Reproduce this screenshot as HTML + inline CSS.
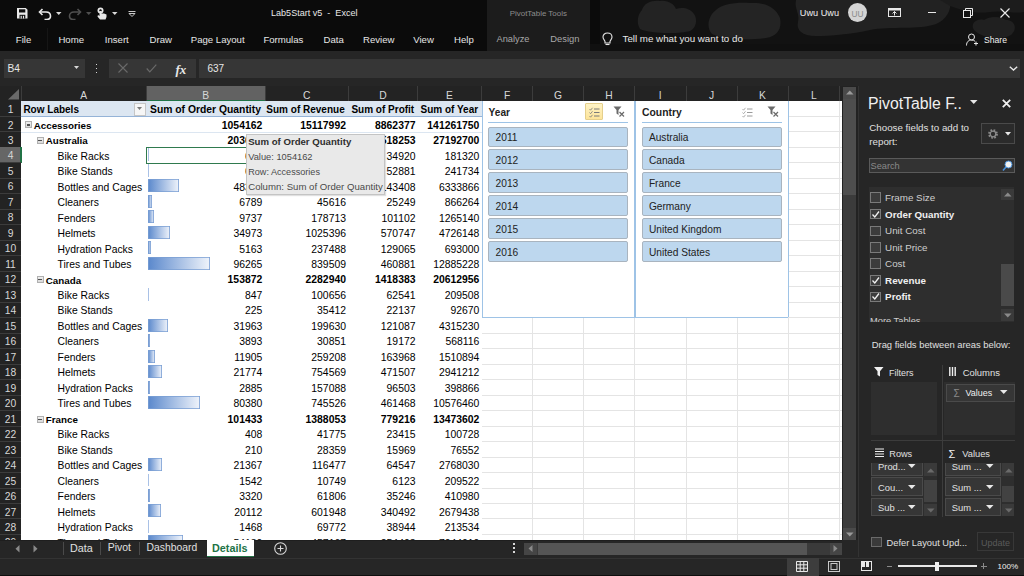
<!DOCTYPE html><html><head><meta charset="utf-8"><style>
html,body{margin:0;padding:0;}
body{width:1024px;height:576px;overflow:hidden;position:relative;background:#262626;font-family:"Liberation Sans",sans-serif;}
.t{position:absolute;white-space:pre;line-height:1;}
.r{position:absolute;}
</style></head><body>
<div class="r" style="left:0.00px;top:0.00px;width:1024.00px;height:51.00px;background:#0b0b0b;"></div>
<div class="r" style="left:487.00px;top:0.00px;width:102.50px;height:51.00px;background:#1c1c1c;"></div>
<svg class="r" style="left:590px;top:0px;" width="434" height="51" viewBox="0 0 434 51">
<rect x="0" y="0" width="434" height="51" fill="#121212"/>
<rect x="0" y="0" width="10" height="51" fill="#0b0b0b"/>
<path d="M50 29 C46 22 48 14 52 10 C54 3 62 0 70 1 C78 0 84 4 86 9 C92 7 100 8 104 14 C108 20 106 28 100 31 C90 34 60 34 50 29Z" fill="#232323"/>
<path d="M122 34 C116 28 118 16 126 10 C132 4 146 2 160 3 C176 2 186 8 190 18 C192 28 188 36 176 38 C160 40 134 40 122 34Z" fill="#242424"/>
<path d="M206 0 H360 C362 10 356 20 346 24 C330 30 300 26 280 30 C262 34 240 36 226 36 C212 36 206 30 208 22 C210 14 204 8 206 0Z" fill="#222222"/>
<path d="M350 0 H434 V12 C424 14 412 10 400 12 C384 14 372 10 360 6Z" fill="#1c1c1c"/>
<path d="M384 30 C380 24 386 18 394 20 C400 16 410 16 416 20 C424 20 428 28 422 34 C416 40 394 40 384 30Z" fill="#202020"/>
<rect x="0" y="44" width="434" height="7" fill="#101010"/>
</svg>
<svg class="r" style="left:17px;top:8px;" width="11" height="11" viewBox="0 0 11 11"><path d="M0 0 H8.8 L10.5 1.7 V10.5 H0 Z" fill="#e8e8e8"/><rect x="2" y="1.3" width="6.3" height="3.2" fill="#0b0b0b"/><rect x="2.5" y="6.8" width="5.8" height="3.7" fill="#0b0b0b"/><rect x="3.6" y="7.8" width="1.2" height="2.7" fill="#e8e8e8"/><rect x="5.9" y="7.8" width="1.2" height="2.7" fill="#e8e8e8"/></svg>
<svg class="r" style="left:38px;top:7px;" width="14" height="13" viewBox="0 0 14 13"><path d="M4.5 2 L1.5 5 L4.5 8" fill="none" stroke="#e8e8e8" stroke-width="1.6"/><path d="M1.8 5 H8 C11 5 12.5 7 12.5 9 C12.5 11 11 12.5 8.5 12.5 H6.5" fill="none" stroke="#e8e8e8" stroke-width="1.6"/></svg>
<svg class="r" style="left:56px;top:12px;" width="6" height="4" viewBox="0 0 6 4"><path d="M0 0 H5.5 L2.75 3Z" fill="#d8d8d8"/></svg>
<svg class="r" style="left:68px;top:7px;" width="14" height="13" viewBox="0 0 14 13"><path d="M9.5 2 L12.5 5 L9.5 8" fill="none" stroke="#505050" stroke-width="1.6"/><path d="M12.2 5 H6 C3 5 1.5 7 1.5 9 C1.5 11 3 12.5 5.5 12.5 H7.5" fill="none" stroke="#505050" stroke-width="1.6"/></svg>
<svg class="r" style="left:86px;top:12px;" width="6" height="4" viewBox="0 0 6 4"><path d="M0 0 H5.5 L2.75 3Z" fill="#505050"/></svg>
<svg class="r" style="left:96px;top:7px;" width="11" height="13" viewBox="0 0 11 13"><circle cx="4.5" cy="3.5" r="3" fill="#e8e8e8"/><circle cx="4.5" cy="3.5" r="1.2" fill="#0b0b0b"/><path d="M3.5 4 V9 L2 8 L1.5 9.5 L4 12.5 H9.5 L10.5 10 V7.5 L8 6.5 H5.5 V4Z" fill="#e8e8e8"/></svg>
<svg class="r" style="left:112px;top:12px;" width="6" height="4" viewBox="0 0 6 4"><path d="M0 0 H5.5 L2.75 3Z" fill="#d8d8d8"/></svg>
<svg class="r" style="left:128px;top:10.5px;" width="8" height="6" viewBox="0 0 8 6"><path d="M0.5 0.5 H7.5" stroke="#c8c8c8" stroke-width="1"/><path d="M1 2.5 H7 L4 5.5Z" fill="none" stroke="#c8c8c8" stroke-width="1"/></svg>
<div class="t" style="left:271.00px;top:9.48px;font-size:9.05px;color:#e8e8e8;">Lab5Start v5  -  Excel</div>
<div class="t" style="left:509.70px;top:10.03px;font-size:7.94px;color:#8c8c8c;">PivotTable Tools</div>
<div class="t" style="left:799.80px;top:9.42px;font-size:9.16px;color:#f0f0f0;">Uwu Uwu</div>
<div class="r" style="left:848px;top:3px;width:19px;height:19px;border-radius:50%;background:#d4d4d4;"></div>
<div class="t" style="left:851.50px;top:9.95px;font-size:8.31px;color:#8a8a8a;">UU</div>
<svg class="r" style="left:888px;top:8px;" width="13" height="9" viewBox="0 0 13 9"><rect x="0.5" y="0.5" width="12" height="8" fill="none" stroke="#e8e8e8" stroke-width="1"/><rect x="0.5" y="0.5" width="12" height="2" fill="#e8e8e8"/><path d="M6.5 7.5 V3.5 M4.5 5.5 L6.5 3.5 L8.5 5.5" stroke="#e8e8e8" fill="none" stroke-width="1"/></svg>
<div class="r" style="left:927.50px;top:12.00px;width:8.50px;height:1.00px;background:#e8e8e8;"></div>
<svg class="r" style="left:963px;top:8px;" width="10" height="10" viewBox="0 0 10 10"><rect x="0.5" y="2.5" width="7" height="7" fill="none" stroke="#e8e8e8"/><path d="M2.5 2.5 V0.5 H9.5 V7.5 H7.5" fill="none" stroke="#e8e8e8"/></svg>
<svg class="r" style="left:1000px;top:8px;" width="10" height="10" viewBox="0 0 10 10"><path d="M0.5 0.5 L9.5 9.5 M9.5 0.5 L0.5 9.5" stroke="#e8e8e8" stroke-width="1.2"/></svg>
<div class="t" style="left:15.77px;top:35.00px;font-size:9.60px;color:#e6e6e6;">File</div>
<div class="t" style="left:58.45px;top:35.00px;font-size:9.60px;color:#e6e6e6;">Home</div>
<div class="t" style="left:104.75px;top:35.00px;font-size:9.60px;color:#e6e6e6;">Insert</div>
<div class="t" style="left:149.55px;top:35.00px;font-size:9.60px;color:#e6e6e6;">Draw</div>
<div class="t" style="left:190.75px;top:35.00px;font-size:9.60px;color:#e6e6e6;">Page Layout</div>
<div class="t" style="left:263.40px;top:35.00px;font-size:9.60px;color:#e6e6e6;">Formulas</div>
<div class="t" style="left:323.56px;top:35.00px;font-size:9.60px;color:#e6e6e6;">Data</div>
<div class="t" style="left:363.01px;top:35.00px;font-size:9.60px;color:#e6e6e6;">Review</div>
<div class="t" style="left:413.26px;top:35.00px;font-size:9.60px;color:#e6e6e6;">View</div>
<div class="t" style="left:454.03px;top:35.00px;font-size:9.60px;color:#e6e6e6;">Help</div>
<div class="r" style="left:47.00px;top:28.00px;width:1.00px;height:22.00px;background:#161616;"></div>
<div class="t" style="left:496.50px;top:35.18px;font-size:9.25px;color:#a8a8a8;">Analyze</div>
<div class="t" style="left:550.30px;top:35.13px;font-size:9.35px;color:#a8a8a8;">Design</div>
<svg class="r" style="left:602px;top:32px;" width="11" height="14" viewBox="0 0 11 14"><path d="M5.5 1 C2.5 1 1 3 1 5 C1 7 2.5 8 3 9.5 V11 H8 V9.5 C8.5 8 10 7 10 5 C10 3 8.5 1 5.5 1Z" fill="none" stroke="#e8e8e8" stroke-width="1.1"/><path d="M3.5 12.5 H7.5" stroke="#e8e8e8" stroke-width="1.1"/></svg>
<div class="t" style="left:622.50px;top:34.23px;font-size:9.75px;color:#e8e8e8;">Tell me what you want to do</div>
<svg class="r" style="left:966px;top:33px;" width="13" height="13" viewBox="0 0 13 13"><circle cx="5.5" cy="4" r="3" fill="none" stroke="#e8e8e8" stroke-width="1"/><path d="M0.5 12.5 C0.5 8.5 3 7 5.5 7 C7 7 8 7.5 9 8.2" fill="none" stroke="#e8e8e8" stroke-width="1"/><path d="M10 8.5 V12.5 M8 10.5 H12" stroke="#e8e8e8" stroke-width="1"/></svg>
<div class="t" style="left:984.00px;top:35.89px;font-size:8.62px;color:#f0f0f0;">Share</div>
<div class="r" style="left:0.00px;top:51.00px;width:1024.00px;height:35.00px;background:#262626;"></div>
<div class="r" style="left:4.00px;top:59.00px;width:81.00px;height:18.50px;background:#363636;"></div>
<div class="t" style="left:7.50px;top:64.39px;font-size:10.22px;color:#e8e8e8;">B4</div>
<svg class="r" style="left:74px;top:66px;" width="6" height="4" viewBox="0 0 6 4"><path d="M0 0 H5 L2.5 3Z" fill="#d8d8d8"/></svg>
<div class="r" style="left:95.50px;top:63.50px;width:1.50px;height:1.50px;background:#d8d8d8;"></div>
<div class="r" style="left:95.50px;top:67.50px;width:1.50px;height:1.50px;background:#d8d8d8;"></div>
<div class="r" style="left:95.50px;top:71.50px;width:1.50px;height:1.50px;background:#d8d8d8;"></div>
<div class="r" style="left:109.00px;top:59.00px;width:87.00px;height:18.50px;background:#363636;"></div>
<svg class="r" style="left:118px;top:63px;" width="10" height="10" viewBox="0 0 10 10"><path d="M0.5 0.5 L9.5 9.5 M9.5 0.5 L0.5 9.5" stroke="#6a6a6a" stroke-width="1.1"/></svg>
<svg class="r" style="left:146px;top:64px;" width="11" height="9" viewBox="0 0 11 9"><path d="M0.7 4.5 L3.8 7.8 L10.3 0.7" fill="none" stroke="#6a6a6a" stroke-width="1.2"/></svg>
<div class="t" style="left:175.50px;top:63.20px;font-size:13.00px;color:#e8e8e8;font-family:Liberation Serif,serif;font-style:italic;font-weight:bold;">fx</div>
<div class="r" style="left:198.50px;top:59.00px;width:821.50px;height:18.50px;background:#363636;"></div>
<div class="t" style="left:207.50px;top:64.49px;font-size:10.01px;color:#e8e8e8;">637</div>
<svg class="r" style="left:1009px;top:66px;" width="9" height="5" viewBox="0 0 9 5"><path d="M0.8 0.8 L4.5 4 L8.2 0.8" fill="none" stroke="#e8e8e8" stroke-width="1.4"/></svg>
<div class="r" style="left:0.00px;top:86.00px;width:842.00px;height:15.00px;background:#232323;"></div>
<div class="r" style="left:146.50px;top:86.00px;width:118.50px;height:14.00px;background:#626262;"></div>
<div class="r" style="left:146.50px;top:99.50px;width:118.50px;height:1.50px;background:#217346;"></div>
<div class="r" style="left:146.00px;top:86.00px;width:1.00px;height:15.00px;background:#3c3c3c;"></div>
<div class="t" style="left:80.31px;top:90.55px;font-size:10.30px;color:#d8d8d8;">A</div>
<div class="r" style="left:264.50px;top:86.00px;width:1.00px;height:15.00px;background:#3c3c3c;"></div>
<div class="t" style="left:202.31px;top:90.55px;font-size:10.30px;color:#d8d8d8;">B</div>
<div class="r" style="left:348.00px;top:86.00px;width:1.00px;height:15.00px;background:#3c3c3c;"></div>
<div class="t" style="left:303.03px;top:90.55px;font-size:10.30px;color:#d8d8d8;">C</div>
<div class="r" style="left:417.00px;top:86.00px;width:1.00px;height:15.00px;background:#3c3c3c;"></div>
<div class="t" style="left:379.28px;top:90.55px;font-size:10.30px;color:#d8d8d8;">D</div>
<div class="r" style="left:481.00px;top:86.00px;width:1.00px;height:15.00px;background:#3c3c3c;"></div>
<div class="t" style="left:446.06px;top:90.55px;font-size:10.30px;color:#d8d8d8;">E</div>
<div class="r" style="left:532.10px;top:86.00px;width:1.00px;height:15.00px;background:#3c3c3c;"></div>
<div class="t" style="left:503.90px;top:90.55px;font-size:10.30px;color:#d8d8d8;">F</div>
<div class="r" style="left:583.00px;top:86.00px;width:1.00px;height:15.00px;background:#3c3c3c;"></div>
<div class="t" style="left:554.04px;top:90.55px;font-size:10.30px;color:#d8d8d8;">G</div>
<div class="r" style="left:634.10px;top:86.00px;width:1.00px;height:15.00px;background:#3c3c3c;"></div>
<div class="t" style="left:605.33px;top:90.55px;font-size:10.30px;color:#d8d8d8;">H</div>
<div class="r" style="left:685.50px;top:86.00px;width:1.00px;height:15.00px;background:#3c3c3c;"></div>
<div class="t" style="left:658.87px;top:90.55px;font-size:10.30px;color:#d8d8d8;">I</div>
<div class="r" style="left:736.50px;top:86.00px;width:1.00px;height:15.00px;background:#3c3c3c;"></div>
<div class="t" style="left:708.92px;top:90.55px;font-size:10.30px;color:#d8d8d8;">J</div>
<div class="r" style="left:787.50px;top:86.00px;width:1.00px;height:15.00px;background:#3c3c3c;"></div>
<div class="t" style="left:759.06px;top:90.55px;font-size:10.30px;color:#d8d8d8;">K</div>
<div class="r" style="left:839.30px;top:86.00px;width:1.00px;height:15.00px;background:#3c3c3c;"></div>
<div class="t" style="left:811.04px;top:90.55px;font-size:10.30px;color:#d8d8d8;">L</div>
<svg class="r" style="left:6px;top:88px;" width="14" height="12" viewBox="0 0 14 12"><path d="M13 1 V11.5 H2 Z" fill="#6a6a6a"/></svg>
<div class="r" style="left:0.00px;top:100.50px;width:21.00px;height:0.50px;background:#3c3c3c;"></div>
<div class="r" style="left:20.50px;top:86.00px;width:1.00px;height:15.00px;background:#3c3c3c;"></div>
<div class="r" style="left:21.00px;top:101.00px;width:820.70px;height:438.60px;background:#ffffff;"></div>
<div class="r" style="left:481.50px;top:115.98px;width:360.20px;height:1.00px;background:#e4e4e4;"></div>
<div class="r" style="left:481.50px;top:131.46px;width:360.20px;height:1.00px;background:#e4e4e4;"></div>
<div class="r" style="left:481.50px;top:146.94px;width:360.20px;height:1.00px;background:#e4e4e4;"></div>
<div class="r" style="left:481.50px;top:162.42px;width:360.20px;height:1.00px;background:#e4e4e4;"></div>
<div class="r" style="left:481.50px;top:177.90px;width:360.20px;height:1.00px;background:#e4e4e4;"></div>
<div class="r" style="left:481.50px;top:193.38px;width:360.20px;height:1.00px;background:#e4e4e4;"></div>
<div class="r" style="left:481.50px;top:208.86px;width:360.20px;height:1.00px;background:#e4e4e4;"></div>
<div class="r" style="left:481.50px;top:224.34px;width:360.20px;height:1.00px;background:#e4e4e4;"></div>
<div class="r" style="left:481.50px;top:239.82px;width:360.20px;height:1.00px;background:#e4e4e4;"></div>
<div class="r" style="left:481.50px;top:255.30px;width:360.20px;height:1.00px;background:#e4e4e4;"></div>
<div class="r" style="left:481.50px;top:270.78px;width:360.20px;height:1.00px;background:#e4e4e4;"></div>
<div class="r" style="left:481.50px;top:286.26px;width:360.20px;height:1.00px;background:#e4e4e4;"></div>
<div class="r" style="left:481.50px;top:301.74px;width:360.20px;height:1.00px;background:#e4e4e4;"></div>
<div class="r" style="left:481.50px;top:317.22px;width:360.20px;height:1.00px;background:#e4e4e4;"></div>
<div class="r" style="left:481.50px;top:332.70px;width:360.20px;height:1.00px;background:#e4e4e4;"></div>
<div class="r" style="left:481.50px;top:348.18px;width:360.20px;height:1.00px;background:#e4e4e4;"></div>
<div class="r" style="left:481.50px;top:363.66px;width:360.20px;height:1.00px;background:#e4e4e4;"></div>
<div class="r" style="left:481.50px;top:379.14px;width:360.20px;height:1.00px;background:#e4e4e4;"></div>
<div class="r" style="left:481.50px;top:394.62px;width:360.20px;height:1.00px;background:#e4e4e4;"></div>
<div class="r" style="left:481.50px;top:410.10px;width:360.20px;height:1.00px;background:#e4e4e4;"></div>
<div class="r" style="left:481.50px;top:425.58px;width:360.20px;height:1.00px;background:#e4e4e4;"></div>
<div class="r" style="left:481.50px;top:441.06px;width:360.20px;height:1.00px;background:#e4e4e4;"></div>
<div class="r" style="left:481.50px;top:456.54px;width:360.20px;height:1.00px;background:#e4e4e4;"></div>
<div class="r" style="left:481.50px;top:472.02px;width:360.20px;height:1.00px;background:#e4e4e4;"></div>
<div class="r" style="left:481.50px;top:487.50px;width:360.20px;height:1.00px;background:#e4e4e4;"></div>
<div class="r" style="left:481.50px;top:502.98px;width:360.20px;height:1.00px;background:#e4e4e4;"></div>
<div class="r" style="left:481.50px;top:518.46px;width:360.20px;height:1.00px;background:#e4e4e4;"></div>
<div class="r" style="left:481.50px;top:533.94px;width:360.20px;height:1.00px;background:#e4e4e4;"></div>
<div class="r" style="left:481.50px;top:549.42px;width:360.20px;height:1.00px;background:#e4e4e4;"></div>
<div class="r" style="left:532.10px;top:101.00px;width:1.00px;height:438.60px;background:#e4e4e4;"></div>
<div class="r" style="left:583.00px;top:101.00px;width:1.00px;height:438.60px;background:#e4e4e4;"></div>
<div class="r" style="left:634.10px;top:101.00px;width:1.00px;height:438.60px;background:#e4e4e4;"></div>
<div class="r" style="left:685.50px;top:101.00px;width:1.00px;height:438.60px;background:#e4e4e4;"></div>
<div class="r" style="left:736.50px;top:101.00px;width:1.00px;height:438.60px;background:#e4e4e4;"></div>
<div class="r" style="left:787.50px;top:101.00px;width:1.00px;height:438.60px;background:#e4e4e4;"></div>
<div class="r" style="left:839.30px;top:101.00px;width:1.00px;height:438.60px;background:#e4e4e4;"></div>
<div class="r" style="left:0.00px;top:101.00px;width:21.00px;height:438.60px;background:#232323;"></div>
<div class="r" style="left:0.00px;top:115.98px;width:21.00px;height:1.00px;background:#3c3c3c;"></div>
<div class="t" style="left:7.64px;top:105.05px;font-size:10.30px;color:#d8d8d8;">1</div>
<div class="r" style="left:0.00px;top:131.46px;width:21.00px;height:1.00px;background:#3c3c3c;"></div>
<div class="t" style="left:7.64px;top:120.53px;font-size:10.30px;color:#d8d8d8;">2</div>
<div class="r" style="left:0.00px;top:146.94px;width:21.00px;height:1.00px;background:#3c3c3c;"></div>
<div class="t" style="left:7.64px;top:136.01px;font-size:10.30px;color:#d8d8d8;">3</div>
<div class="r" style="left:0.00px;top:147.44px;width:20.00px;height:15.48px;background:#666666;"></div>
<div class="r" style="left:20.00px;top:147.44px;width:1.50px;height:15.48px;background:#217346;"></div>
<div class="r" style="left:0.00px;top:162.42px;width:21.00px;height:1.00px;background:#3c3c3c;"></div>
<div class="t" style="left:7.64px;top:151.49px;font-size:10.30px;color:#d8d8d8;">4</div>
<div class="r" style="left:0.00px;top:177.90px;width:21.00px;height:1.00px;background:#3c3c3c;"></div>
<div class="t" style="left:7.64px;top:166.97px;font-size:10.30px;color:#d8d8d8;">5</div>
<div class="r" style="left:0.00px;top:193.38px;width:21.00px;height:1.00px;background:#3c3c3c;"></div>
<div class="t" style="left:7.64px;top:182.45px;font-size:10.30px;color:#d8d8d8;">6</div>
<div class="r" style="left:0.00px;top:208.86px;width:21.00px;height:1.00px;background:#3c3c3c;"></div>
<div class="t" style="left:7.64px;top:197.93px;font-size:10.30px;color:#d8d8d8;">7</div>
<div class="r" style="left:0.00px;top:224.34px;width:21.00px;height:1.00px;background:#3c3c3c;"></div>
<div class="t" style="left:7.64px;top:213.41px;font-size:10.30px;color:#d8d8d8;">8</div>
<div class="r" style="left:0.00px;top:239.82px;width:21.00px;height:1.00px;background:#3c3c3c;"></div>
<div class="t" style="left:7.64px;top:228.89px;font-size:10.30px;color:#d8d8d8;">9</div>
<div class="r" style="left:0.00px;top:255.30px;width:21.00px;height:1.00px;background:#3c3c3c;"></div>
<div class="t" style="left:4.77px;top:244.37px;font-size:10.30px;color:#d8d8d8;">10</div>
<div class="r" style="left:0.00px;top:270.78px;width:21.00px;height:1.00px;background:#3c3c3c;"></div>
<div class="t" style="left:5.15px;top:259.85px;font-size:10.30px;color:#d8d8d8;">11</div>
<div class="r" style="left:0.00px;top:286.26px;width:21.00px;height:1.00px;background:#3c3c3c;"></div>
<div class="t" style="left:4.77px;top:275.33px;font-size:10.30px;color:#d8d8d8;">12</div>
<div class="r" style="left:0.00px;top:301.74px;width:21.00px;height:1.00px;background:#3c3c3c;"></div>
<div class="t" style="left:4.77px;top:290.81px;font-size:10.30px;color:#d8d8d8;">13</div>
<div class="r" style="left:0.00px;top:317.22px;width:21.00px;height:1.00px;background:#3c3c3c;"></div>
<div class="t" style="left:4.77px;top:306.29px;font-size:10.30px;color:#d8d8d8;">14</div>
<div class="r" style="left:0.00px;top:332.70px;width:21.00px;height:1.00px;background:#3c3c3c;"></div>
<div class="t" style="left:4.77px;top:321.77px;font-size:10.30px;color:#d8d8d8;">15</div>
<div class="r" style="left:0.00px;top:348.18px;width:21.00px;height:1.00px;background:#3c3c3c;"></div>
<div class="t" style="left:4.77px;top:337.25px;font-size:10.30px;color:#d8d8d8;">16</div>
<div class="r" style="left:0.00px;top:363.66px;width:21.00px;height:1.00px;background:#3c3c3c;"></div>
<div class="t" style="left:4.77px;top:352.73px;font-size:10.30px;color:#d8d8d8;">17</div>
<div class="r" style="left:0.00px;top:379.14px;width:21.00px;height:1.00px;background:#3c3c3c;"></div>
<div class="t" style="left:4.77px;top:368.21px;font-size:10.30px;color:#d8d8d8;">18</div>
<div class="r" style="left:0.00px;top:394.62px;width:21.00px;height:1.00px;background:#3c3c3c;"></div>
<div class="t" style="left:4.77px;top:383.69px;font-size:10.30px;color:#d8d8d8;">19</div>
<div class="r" style="left:0.00px;top:410.10px;width:21.00px;height:1.00px;background:#3c3c3c;"></div>
<div class="t" style="left:4.77px;top:399.17px;font-size:10.30px;color:#d8d8d8;">20</div>
<div class="r" style="left:0.00px;top:425.58px;width:21.00px;height:1.00px;background:#3c3c3c;"></div>
<div class="t" style="left:4.77px;top:414.65px;font-size:10.30px;color:#d8d8d8;">21</div>
<div class="r" style="left:0.00px;top:441.06px;width:21.00px;height:1.00px;background:#3c3c3c;"></div>
<div class="t" style="left:4.77px;top:430.13px;font-size:10.30px;color:#d8d8d8;">22</div>
<div class="r" style="left:0.00px;top:456.54px;width:21.00px;height:1.00px;background:#3c3c3c;"></div>
<div class="t" style="left:4.77px;top:445.61px;font-size:10.30px;color:#d8d8d8;">23</div>
<div class="r" style="left:0.00px;top:472.02px;width:21.00px;height:1.00px;background:#3c3c3c;"></div>
<div class="t" style="left:4.77px;top:461.09px;font-size:10.30px;color:#d8d8d8;">24</div>
<div class="r" style="left:0.00px;top:487.50px;width:21.00px;height:1.00px;background:#3c3c3c;"></div>
<div class="t" style="left:4.77px;top:476.57px;font-size:10.30px;color:#d8d8d8;">25</div>
<div class="r" style="left:0.00px;top:502.98px;width:21.00px;height:1.00px;background:#3c3c3c;"></div>
<div class="t" style="left:4.77px;top:492.05px;font-size:10.30px;color:#d8d8d8;">26</div>
<div class="r" style="left:0.00px;top:518.46px;width:21.00px;height:1.00px;background:#3c3c3c;"></div>
<div class="t" style="left:4.77px;top:507.53px;font-size:10.30px;color:#d8d8d8;">27</div>
<div class="r" style="left:0.00px;top:533.94px;width:21.00px;height:1.00px;background:#3c3c3c;"></div>
<div class="t" style="left:4.77px;top:523.01px;font-size:10.30px;color:#d8d8d8;">28</div>
<div class="r" style="left:0.00px;top:549.42px;width:21.00px;height:1.00px;background:#3c3c3c;"></div>
<div class="t" style="left:4.77px;top:538.49px;font-size:10.30px;color:#d8d8d8;">29</div>
<div class="r" style="left:21.00px;top:101.00px;width:460.50px;height:15.50px;background:#dce6f1;"></div>
<div class="r" style="left:21.00px;top:116.00px;width:460.50px;height:1.00px;background:#95b3d7;"></div>
<div class="r" style="left:21.00px;top:131.50px;width:460.50px;height:1.00px;background:#dce6f1;"></div>
<div class="r" style="left:133.50px;top:102.50px;width:12.50px;height:13.00px;background:#f6f6f6;border:1px solid #c6c6c6;box-sizing:border-box;"></div>
<svg class="r" style="left:137px;top:107px;" width="6" height="4" viewBox="0 0 6 4"><path d="M0 0 H5 L2.5 3Z" fill="#7a7a7a"/></svg>
<div class="t" style="left:23.40px;top:105.40px;font-size:10.00px;font-weight:bold;color:#000;">Row Labels</div>
<div class="t" style="left:150.02px;top:105.23px;font-size:10.35px;font-weight:bold;color:#000;">Sum of Order Quantity</div>
<div class="t" style="left:266.35px;top:105.40px;font-size:10.00px;font-weight:bold;color:#000;">Sum of Revenue</div>
<div class="t" style="left:351.43px;top:105.40px;font-size:10.00px;font-weight:bold;color:#000;">Sum of Profit</div>
<div class="t" style="left:420.48px;top:105.40px;font-size:10.00px;font-weight:bold;color:#000;">Sum of Year</div>
<div class="r" style="left:25.20px;top:121.48px;width:6.50px;height:7.00px;background:linear-gradient(#f0f0f0,#d8d8d8);border:1px solid #b0b0b0;box-sizing:border-box;"></div>
<div class="r" style="left:26.50px;top:124.48px;width:3.90px;height:1.20px;background:#505050;"></div>
<div class="t" style="left:33.70px;top:120.98px;font-size:9.80px;font-weight:bold;color:#000;">Accessories</div>
<div class="t" style="left:221.82px;top:120.68px;font-size:10.40px;font-weight:bold;color:#000;">1054162</div>
<div class="t" style="left:300.31px;top:120.68px;font-size:10.40px;font-weight:bold;color:#000;">15117992</div>
<div class="t" style="left:375.02px;top:120.68px;font-size:10.40px;font-weight:bold;color:#000;">8862377</div>
<div class="t" style="left:427.35px;top:120.68px;font-size:10.40px;font-weight:bold;color:#000;">141261750</div>
<div class="r" style="left:37.10px;top:136.96px;width:6.50px;height:7.00px;background:linear-gradient(#f0f0f0,#d8d8d8);border:1px solid #b0b0b0;box-sizing:border-box;"></div>
<div class="r" style="left:38.40px;top:139.96px;width:3.90px;height:1.20px;background:#505050;"></div>
<div class="t" style="left:45.80px;top:136.46px;font-size:9.80px;font-weight:bold;color:#000;">Australia</div>
<div class="t" style="left:227.60px;top:136.16px;font-size:10.40px;font-weight:bold;color:#000;">203636</div>
<div class="t" style="left:305.52px;top:136.16px;font-size:10.40px;font-weight:bold;color:#000;">2970436</div>
<div class="t" style="left:375.02px;top:136.16px;font-size:10.40px;font-weight:bold;color:#000;">1518253</div>
<div class="t" style="left:433.13px;top:136.16px;font-size:10.40px;font-weight:bold;color:#000;">27192700</div>
<div class="t" style="left:57.60px;top:151.66px;font-size:10.35px;color:#000;">Bike Racks</div>
<div class="t" style="left:244.95px;top:151.64px;font-size:10.40px;color:#000;">637</div>
<div class="t" style="left:317.08px;top:151.64px;font-size:10.40px;color:#000;">61238</div>
<div class="t" style="left:386.58px;top:151.64px;font-size:10.40px;color:#000;">34920</div>
<div class="t" style="left:444.70px;top:151.64px;font-size:10.40px;color:#000;">181320</div>
<div class="r" style="left:147.8px;top:148.44px;width:1.6px;height:12.98px;background:#a9c1e6;"></div>
<div class="t" style="left:57.60px;top:167.14px;font-size:10.35px;color:#000;">Bike Stands</div>
<div class="t" style="left:244.95px;top:167.12px;font-size:10.40px;color:#000;">660</div>
<div class="t" style="left:317.08px;top:167.12px;font-size:10.40px;color:#000;">88450</div>
<div class="t" style="left:386.58px;top:167.12px;font-size:10.40px;color:#000;">52881</div>
<div class="t" style="left:444.70px;top:167.12px;font-size:10.40px;color:#000;">241734</div>
<div class="r" style="left:147.8px;top:163.92px;width:1.6px;height:12.98px;background:#a9c1e6;"></div>
<div class="t" style="left:57.60px;top:182.62px;font-size:10.35px;color:#000;">Bottles and Cages</div>
<div class="t" style="left:233.38px;top:182.60px;font-size:10.40px;color:#000;">48321</div>
<div class="t" style="left:317.08px;top:182.60px;font-size:10.40px;color:#000;">74622</div>
<div class="t" style="left:380.80px;top:182.60px;font-size:10.40px;color:#000;">143408</div>
<div class="t" style="left:438.92px;top:182.60px;font-size:10.40px;color:#000;">6333866</div>
<div class="r" style="left:147.8px;top:179.40px;width:31.22px;height:12.98px;background:linear-gradient(90deg,#5a88cc,#f0f4fb);box-shadow:inset 0 0 0 0.8px #7a9fd4;"></div>
<div class="t" style="left:57.60px;top:198.10px;font-size:10.35px;color:#000;">Cleaners</div>
<div class="t" style="left:239.17px;top:198.08px;font-size:10.40px;color:#000;">6789</div>
<div class="t" style="left:317.08px;top:198.08px;font-size:10.40px;color:#000;">45616</div>
<div class="t" style="left:386.58px;top:198.08px;font-size:10.40px;color:#000;">25249</div>
<div class="t" style="left:444.70px;top:198.08px;font-size:10.40px;color:#000;">866264</div>
<div class="r" style="left:147.8px;top:194.88px;width:4.39px;height:12.98px;background:linear-gradient(90deg,#5a88cc,#f0f4fb);box-shadow:inset 0 0 0 0.8px #7a9fd4;"></div>
<div class="t" style="left:57.60px;top:213.58px;font-size:10.35px;color:#000;">Fenders</div>
<div class="t" style="left:239.17px;top:213.56px;font-size:10.40px;color:#000;">9737</div>
<div class="t" style="left:311.30px;top:213.56px;font-size:10.40px;color:#000;">178713</div>
<div class="t" style="left:381.57px;top:213.56px;font-size:10.40px;color:#000;">101102</div>
<div class="t" style="left:438.92px;top:213.56px;font-size:10.40px;color:#000;">1265140</div>
<div class="r" style="left:147.8px;top:210.36px;width:6.29px;height:12.98px;background:linear-gradient(90deg,#5a88cc,#f0f4fb);box-shadow:inset 0 0 0 0.8px #7a9fd4;"></div>
<div class="t" style="left:57.60px;top:229.06px;font-size:10.35px;color:#000;">Helmets</div>
<div class="t" style="left:233.38px;top:229.04px;font-size:10.40px;color:#000;">34973</div>
<div class="t" style="left:305.52px;top:229.04px;font-size:10.40px;color:#000;">1025396</div>
<div class="t" style="left:380.80px;top:229.04px;font-size:10.40px;color:#000;">570747</div>
<div class="t" style="left:438.92px;top:229.04px;font-size:10.40px;color:#000;">4726148</div>
<div class="r" style="left:147.8px;top:225.84px;width:22.59px;height:12.98px;background:linear-gradient(90deg,#5a88cc,#f0f4fb);box-shadow:inset 0 0 0 0.8px #7a9fd4;"></div>
<div class="t" style="left:57.60px;top:244.54px;font-size:10.35px;color:#000;">Hydration Packs</div>
<div class="t" style="left:239.17px;top:244.52px;font-size:10.40px;color:#000;">5163</div>
<div class="t" style="left:311.30px;top:244.52px;font-size:10.40px;color:#000;">237488</div>
<div class="t" style="left:380.80px;top:244.52px;font-size:10.40px;color:#000;">129065</div>
<div class="t" style="left:444.70px;top:244.52px;font-size:10.40px;color:#000;">693000</div>
<div class="r" style="left:147.8px;top:241.32px;width:3.34px;height:12.98px;background:linear-gradient(90deg,#5a88cc,#f0f4fb);box-shadow:inset 0 0 0 0.8px #7a9fd4;"></div>
<div class="t" style="left:57.60px;top:260.02px;font-size:10.35px;color:#000;">Tires and Tubes</div>
<div class="t" style="left:233.38px;top:260.00px;font-size:10.40px;color:#000;">96265</div>
<div class="t" style="left:311.30px;top:260.00px;font-size:10.40px;color:#000;">839509</div>
<div class="t" style="left:380.80px;top:260.00px;font-size:10.40px;color:#000;">460881</div>
<div class="t" style="left:433.13px;top:260.00px;font-size:10.40px;color:#000;">12885228</div>
<div class="r" style="left:147.8px;top:256.80px;width:62.19px;height:12.98px;background:linear-gradient(90deg,#5a88cc,#f0f4fb);box-shadow:inset 0 0 0 0.8px #7a9fd4;"></div>
<div class="r" style="left:37.10px;top:276.28px;width:6.50px;height:7.00px;background:linear-gradient(#f0f0f0,#d8d8d8);border:1px solid #b0b0b0;box-sizing:border-box;"></div>
<div class="r" style="left:38.40px;top:279.28px;width:3.90px;height:1.20px;background:#505050;"></div>
<div class="t" style="left:45.80px;top:275.78px;font-size:9.80px;font-weight:bold;color:#000;">Canada</div>
<div class="t" style="left:227.60px;top:275.48px;font-size:10.40px;font-weight:bold;color:#000;">153872</div>
<div class="t" style="left:305.52px;top:275.48px;font-size:10.40px;font-weight:bold;color:#000;">2282940</div>
<div class="t" style="left:375.02px;top:275.48px;font-size:10.40px;font-weight:bold;color:#000;">1418383</div>
<div class="t" style="left:433.13px;top:275.48px;font-size:10.40px;font-weight:bold;color:#000;">20612956</div>
<div class="t" style="left:57.60px;top:290.98px;font-size:10.35px;color:#000;">Bike Racks</div>
<div class="t" style="left:244.95px;top:290.96px;font-size:10.40px;color:#000;">847</div>
<div class="t" style="left:311.30px;top:290.96px;font-size:10.40px;color:#000;">100656</div>
<div class="t" style="left:386.58px;top:290.96px;font-size:10.40px;color:#000;">62541</div>
<div class="t" style="left:444.70px;top:290.96px;font-size:10.40px;color:#000;">209508</div>
<div class="r" style="left:147.8px;top:287.76px;width:1.6px;height:12.98px;background:#a9c1e6;"></div>
<div class="t" style="left:57.60px;top:306.46px;font-size:10.35px;color:#000;">Bike Stands</div>
<div class="t" style="left:244.95px;top:306.44px;font-size:10.40px;color:#000;">225</div>
<div class="t" style="left:317.08px;top:306.44px;font-size:10.40px;color:#000;">35412</div>
<div class="t" style="left:386.58px;top:306.44px;font-size:10.40px;color:#000;">22137</div>
<div class="t" style="left:450.48px;top:306.44px;font-size:10.40px;color:#000;">92670</div>
<div class="t" style="left:57.60px;top:321.94px;font-size:10.35px;color:#000;">Bottles and Cages</div>
<div class="t" style="left:233.38px;top:321.92px;font-size:10.40px;color:#000;">31963</div>
<div class="t" style="left:311.30px;top:321.92px;font-size:10.40px;color:#000;">199630</div>
<div class="t" style="left:380.80px;top:321.92px;font-size:10.40px;color:#000;">121087</div>
<div class="t" style="left:438.92px;top:321.92px;font-size:10.40px;color:#000;">4315230</div>
<div class="r" style="left:147.8px;top:318.72px;width:20.65px;height:12.98px;background:linear-gradient(90deg,#5a88cc,#f0f4fb);box-shadow:inset 0 0 0 0.8px #7a9fd4;"></div>
<div class="t" style="left:57.60px;top:337.43px;font-size:10.35px;color:#000;">Cleaners</div>
<div class="t" style="left:239.17px;top:337.40px;font-size:10.40px;color:#000;">3893</div>
<div class="t" style="left:317.08px;top:337.40px;font-size:10.40px;color:#000;">30851</div>
<div class="t" style="left:386.58px;top:337.40px;font-size:10.40px;color:#000;">19172</div>
<div class="t" style="left:445.47px;top:337.40px;font-size:10.40px;color:#000;">568116</div>
<div class="r" style="left:147.8px;top:334.20px;width:2.51px;height:12.98px;background:linear-gradient(90deg,#5a88cc,#f0f4fb);box-shadow:inset 0 0 0 0.8px #7a9fd4;"></div>
<div class="t" style="left:57.60px;top:352.90px;font-size:10.35px;color:#000;">Fenders</div>
<div class="t" style="left:234.16px;top:352.88px;font-size:10.40px;color:#000;">11905</div>
<div class="t" style="left:311.30px;top:352.88px;font-size:10.40px;color:#000;">259208</div>
<div class="t" style="left:380.80px;top:352.88px;font-size:10.40px;color:#000;">163968</div>
<div class="t" style="left:438.92px;top:352.88px;font-size:10.40px;color:#000;">1510894</div>
<div class="r" style="left:147.8px;top:349.68px;width:7.69px;height:12.98px;background:linear-gradient(90deg,#5a88cc,#f0f4fb);box-shadow:inset 0 0 0 0.8px #7a9fd4;"></div>
<div class="t" style="left:57.60px;top:368.38px;font-size:10.35px;color:#000;">Helmets</div>
<div class="t" style="left:233.38px;top:368.36px;font-size:10.40px;color:#000;">21774</div>
<div class="t" style="left:311.30px;top:368.36px;font-size:10.40px;color:#000;">754569</div>
<div class="t" style="left:380.80px;top:368.36px;font-size:10.40px;color:#000;">471507</div>
<div class="t" style="left:438.92px;top:368.36px;font-size:10.40px;color:#000;">2941212</div>
<div class="r" style="left:147.8px;top:365.16px;width:14.07px;height:12.98px;background:linear-gradient(90deg,#5a88cc,#f0f4fb);box-shadow:inset 0 0 0 0.8px #7a9fd4;"></div>
<div class="t" style="left:57.60px;top:383.86px;font-size:10.35px;color:#000;">Hydration Packs</div>
<div class="t" style="left:239.17px;top:383.84px;font-size:10.40px;color:#000;">2885</div>
<div class="t" style="left:311.30px;top:383.84px;font-size:10.40px;color:#000;">157088</div>
<div class="t" style="left:386.58px;top:383.84px;font-size:10.40px;color:#000;">96503</div>
<div class="t" style="left:444.70px;top:383.84px;font-size:10.40px;color:#000;">398866</div>
<div class="r" style="left:147.8px;top:380.64px;width:1.86px;height:12.98px;background:linear-gradient(90deg,#5a88cc,#f0f4fb);box-shadow:inset 0 0 0 0.8px #7a9fd4;"></div>
<div class="t" style="left:57.60px;top:399.34px;font-size:10.35px;color:#000;">Tires and Tubes</div>
<div class="t" style="left:233.38px;top:399.32px;font-size:10.40px;color:#000;">80380</div>
<div class="t" style="left:311.30px;top:399.32px;font-size:10.40px;color:#000;">745526</div>
<div class="t" style="left:380.80px;top:399.32px;font-size:10.40px;color:#000;">461468</div>
<div class="t" style="left:433.13px;top:399.32px;font-size:10.40px;color:#000;">10576460</div>
<div class="r" style="left:147.8px;top:396.12px;width:51.93px;height:12.98px;background:linear-gradient(90deg,#5a88cc,#f0f4fb);box-shadow:inset 0 0 0 0.8px #7a9fd4;"></div>
<div class="r" style="left:37.10px;top:415.60px;width:6.50px;height:7.00px;background:linear-gradient(#f0f0f0,#d8d8d8);border:1px solid #b0b0b0;box-sizing:border-box;"></div>
<div class="r" style="left:38.40px;top:418.60px;width:3.90px;height:1.20px;background:#505050;"></div>
<div class="t" style="left:45.80px;top:415.10px;font-size:9.80px;font-weight:bold;color:#000;">France</div>
<div class="t" style="left:227.60px;top:414.80px;font-size:10.40px;font-weight:bold;color:#000;">101433</div>
<div class="t" style="left:305.52px;top:414.80px;font-size:10.40px;font-weight:bold;color:#000;">1388053</div>
<div class="t" style="left:380.80px;top:414.80px;font-size:10.40px;font-weight:bold;color:#000;">779216</div>
<div class="t" style="left:433.13px;top:414.80px;font-size:10.40px;font-weight:bold;color:#000;">13473602</div>
<div class="t" style="left:57.60px;top:430.30px;font-size:10.35px;color:#000;">Bike Racks</div>
<div class="t" style="left:244.95px;top:430.28px;font-size:10.40px;color:#000;">408</div>
<div class="t" style="left:317.08px;top:430.28px;font-size:10.40px;color:#000;">41775</div>
<div class="t" style="left:386.58px;top:430.28px;font-size:10.40px;color:#000;">23415</div>
<div class="t" style="left:444.70px;top:430.28px;font-size:10.40px;color:#000;">100728</div>
<div class="t" style="left:57.60px;top:445.78px;font-size:10.35px;color:#000;">Bike Stands</div>
<div class="t" style="left:244.95px;top:445.76px;font-size:10.40px;color:#000;">210</div>
<div class="t" style="left:317.08px;top:445.76px;font-size:10.40px;color:#000;">28359</div>
<div class="t" style="left:386.58px;top:445.76px;font-size:10.40px;color:#000;">15969</div>
<div class="t" style="left:450.48px;top:445.76px;font-size:10.40px;color:#000;">76552</div>
<div class="t" style="left:57.60px;top:461.26px;font-size:10.35px;color:#000;">Bottles and Cages</div>
<div class="t" style="left:233.38px;top:461.24px;font-size:10.40px;color:#000;">21367</div>
<div class="t" style="left:312.07px;top:461.24px;font-size:10.40px;color:#000;">116477</div>
<div class="t" style="left:386.58px;top:461.24px;font-size:10.40px;color:#000;">64547</div>
<div class="t" style="left:438.92px;top:461.24px;font-size:10.40px;color:#000;">2768030</div>
<div class="r" style="left:147.8px;top:458.04px;width:13.80px;height:12.98px;background:linear-gradient(90deg,#5a88cc,#f0f4fb);box-shadow:inset 0 0 0 0.8px #7a9fd4;"></div>
<div class="t" style="left:57.60px;top:476.74px;font-size:10.35px;color:#000;">Cleaners</div>
<div class="t" style="left:239.17px;top:476.72px;font-size:10.40px;color:#000;">1542</div>
<div class="t" style="left:317.08px;top:476.72px;font-size:10.40px;color:#000;">10749</div>
<div class="t" style="left:392.37px;top:476.72px;font-size:10.40px;color:#000;">6123</div>
<div class="t" style="left:444.70px;top:476.72px;font-size:10.40px;color:#000;">209522</div>
<div class="r" style="left:147.8px;top:473.52px;width:1.6px;height:12.98px;background:#a9c1e6;"></div>
<div class="t" style="left:57.60px;top:492.22px;font-size:10.35px;color:#000;">Fenders</div>
<div class="t" style="left:239.17px;top:492.20px;font-size:10.40px;color:#000;">3320</div>
<div class="t" style="left:317.08px;top:492.20px;font-size:10.40px;color:#000;">61806</div>
<div class="t" style="left:386.58px;top:492.20px;font-size:10.40px;color:#000;">35246</div>
<div class="t" style="left:444.70px;top:492.20px;font-size:10.40px;color:#000;">410980</div>
<div class="r" style="left:147.8px;top:489.00px;width:2.14px;height:12.98px;background:linear-gradient(90deg,#5a88cc,#f0f4fb);box-shadow:inset 0 0 0 0.8px #7a9fd4;"></div>
<div class="t" style="left:57.60px;top:507.70px;font-size:10.35px;color:#000;">Helmets</div>
<div class="t" style="left:234.16px;top:507.68px;font-size:10.40px;color:#000;">20112</div>
<div class="t" style="left:311.30px;top:507.68px;font-size:10.40px;color:#000;">601948</div>
<div class="t" style="left:380.80px;top:507.68px;font-size:10.40px;color:#000;">340492</div>
<div class="t" style="left:438.92px;top:507.68px;font-size:10.40px;color:#000;">2679438</div>
<div class="r" style="left:147.8px;top:504.48px;width:12.99px;height:12.98px;background:linear-gradient(90deg,#5a88cc,#f0f4fb);box-shadow:inset 0 0 0 0.8px #7a9fd4;"></div>
<div class="t" style="left:57.60px;top:523.19px;font-size:10.35px;color:#000;">Hydration Packs</div>
<div class="t" style="left:239.17px;top:523.16px;font-size:10.40px;color:#000;">1468</div>
<div class="t" style="left:317.08px;top:523.16px;font-size:10.40px;color:#000;">69772</div>
<div class="t" style="left:386.58px;top:523.16px;font-size:10.40px;color:#000;">38944</div>
<div class="t" style="left:444.70px;top:523.16px;font-size:10.40px;color:#000;">213534</div>
<div class="r" style="left:147.8px;top:519.96px;width:1.6px;height:12.98px;background:#a9c1e6;"></div>
<div class="t" style="left:57.60px;top:538.67px;font-size:10.35px;color:#000;">Tires and Tubes</div>
<div class="t" style="left:233.38px;top:538.64px;font-size:10.40px;color:#000;">54180</div>
<div class="t" style="left:311.30px;top:538.64px;font-size:10.40px;color:#000;">457167</div>
<div class="t" style="left:380.80px;top:538.64px;font-size:10.40px;color:#000;">254403</div>
<div class="t" style="left:438.92px;top:538.64px;font-size:10.40px;color:#000;">7044010</div>
<div class="r" style="left:147.8px;top:535.44px;width:35.00px;height:12.98px;background:linear-gradient(90deg,#5a88cc,#f0f4fb);box-shadow:inset 0 0 0 0.8px #7a9fd4;"></div>
<div class="r" style="left:146.00px;top:147.00px;width:118.80px;height:16.60px;border:1.6px solid #2f7a4e;box-sizing:border-box;"></div>
<div class="r" style="left:246.0px;top:134.0px;width:138.8px;height:60.8px;background:#e9e9e9;border:1px solid #c4c4c4;box-sizing:border-box;box-shadow:1px 1px 1px rgba(0,0,0,0.12);"></div>
<div class="t" style="left:248.20px;top:136.89px;font-size:9.62px;font-weight:bold;color:#2e2e2e;">Sum of Order Quantity</div>
<div class="t" style="left:248.20px;top:152.55px;font-size:9.29px;color:#4a4a4a;">Value: 1054162</div>
<div class="t" style="left:248.20px;top:167.95px;font-size:9.10px;color:#4a4a4a;">Row: Accessories</div>
<div class="t" style="left:248.20px;top:182.39px;font-size:9.62px;color:#4a4a4a;">Column: Sum of Order Quantity</div>
<div class="r" style="left:481.50px;top:100.70px;width:153.30px;height:216.80px;background:#ffffff;"></div>
<div class="r" style="left:481.50px;top:100.70px;width:1.00px;height:216.80px;background:#9ec3e6;"></div>
<div class="r" style="left:633.80px;top:100.70px;width:1.00px;height:216.80px;background:#9ec3e6;"></div>
<div class="r" style="left:481.50px;top:316.50px;width:153.30px;height:1.00px;background:#9ec3e6;"></div>
<div class="t" style="left:488.60px;top:108.44px;font-size:10.13px;font-weight:bold;color:#222;">Year</div>
<div class="r" style="left:488.30px;top:122.20px;width:139.60px;height:1.00px;background:#9dc3e6;"></div>
<div class="r" style="left:488.30px;top:126.50px;width:139.60px;height:20.3px;background:#bdd7ee;border:1px solid #a9b4bf;box-sizing:border-box;border-radius:2px;"></div>
<div class="t" style="left:495.60px;top:132.60px;font-size:10.20px;color:#222;">2011</div>
<div class="r" style="left:488.30px;top:149.48px;width:139.60px;height:20.3px;background:#bdd7ee;border:1px solid #a9b4bf;box-sizing:border-box;border-radius:2px;"></div>
<div class="t" style="left:495.60px;top:155.58px;font-size:10.20px;color:#222;">2012</div>
<div class="r" style="left:488.30px;top:172.46px;width:139.60px;height:20.3px;background:#bdd7ee;border:1px solid #a9b4bf;box-sizing:border-box;border-radius:2px;"></div>
<div class="t" style="left:495.60px;top:178.56px;font-size:10.20px;color:#222;">2013</div>
<div class="r" style="left:488.30px;top:195.44px;width:139.60px;height:20.3px;background:#bdd7ee;border:1px solid #a9b4bf;box-sizing:border-box;border-radius:2px;"></div>
<div class="t" style="left:495.60px;top:201.54px;font-size:10.20px;color:#222;">2014</div>
<div class="r" style="left:488.30px;top:218.42px;width:139.60px;height:20.3px;background:#bdd7ee;border:1px solid #a9b4bf;box-sizing:border-box;border-radius:2px;"></div>
<div class="t" style="left:495.60px;top:224.52px;font-size:10.20px;color:#222;">2015</div>
<div class="r" style="left:488.30px;top:241.40px;width:139.60px;height:20.3px;background:#bdd7ee;border:1px solid #a9b4bf;box-sizing:border-box;border-radius:2px;"></div>
<div class="t" style="left:495.60px;top:247.50px;font-size:10.20px;color:#222;">2016</div>
<div class="r" style="left:634.80px;top:100.70px;width:153.70px;height:216.80px;background:#ffffff;"></div>
<div class="r" style="left:634.80px;top:100.70px;width:1.00px;height:216.80px;background:#9ec3e6;"></div>
<div class="r" style="left:787.50px;top:100.70px;width:1.00px;height:216.80px;background:#9ec3e6;"></div>
<div class="r" style="left:634.80px;top:316.50px;width:153.70px;height:1.00px;background:#9ec3e6;"></div>
<div class="t" style="left:642.00px;top:108.32px;font-size:10.36px;font-weight:bold;color:#222;">Country</div>
<div class="r" style="left:641.60px;top:122.20px;width:140.00px;height:1.00px;background:#9dc3e6;"></div>
<div class="r" style="left:641.60px;top:126.50px;width:140.00px;height:20.3px;background:#bdd7ee;border:1px solid #a9b4bf;box-sizing:border-box;border-radius:2px;"></div>
<div class="t" style="left:648.90px;top:132.60px;font-size:10.20px;color:#222;">Australia</div>
<div class="r" style="left:641.60px;top:149.48px;width:140.00px;height:20.3px;background:#bdd7ee;border:1px solid #a9b4bf;box-sizing:border-box;border-radius:2px;"></div>
<div class="t" style="left:648.90px;top:155.58px;font-size:10.20px;color:#222;">Canada</div>
<div class="r" style="left:641.60px;top:172.46px;width:140.00px;height:20.3px;background:#bdd7ee;border:1px solid #a9b4bf;box-sizing:border-box;border-radius:2px;"></div>
<div class="t" style="left:648.90px;top:178.56px;font-size:10.20px;color:#222;">France</div>
<div class="r" style="left:641.60px;top:195.44px;width:140.00px;height:20.3px;background:#bdd7ee;border:1px solid #a9b4bf;box-sizing:border-box;border-radius:2px;"></div>
<div class="t" style="left:648.90px;top:201.54px;font-size:10.20px;color:#222;">Germany</div>
<div class="r" style="left:641.60px;top:218.42px;width:140.00px;height:20.3px;background:#bdd7ee;border:1px solid #a9b4bf;box-sizing:border-box;border-radius:2px;"></div>
<div class="t" style="left:648.90px;top:224.52px;font-size:10.20px;color:#222;">United Kingdom</div>
<div class="r" style="left:641.60px;top:241.40px;width:140.00px;height:20.3px;background:#bdd7ee;border:1px solid #a9b4bf;box-sizing:border-box;border-radius:2px;"></div>
<div class="t" style="left:648.90px;top:247.50px;font-size:10.20px;color:#222;">United States</div>
<div class="r" style="left:585px;top:103.3px;width:17.6px;height:17.2px;background:linear-gradient(#fef3c6,#fde49a);border:1px solid #e5cf8c;box-sizing:border-box;border-radius:1px;"></div>
<svg class="r" style="left:589px;top:106.5px;" width="11" height="11" viewBox="0 0 11 11"><path d="M0.5 2 L1.6 3.2 L3.5 0.8 M0.5 5.5 L1.6 6.7 L3.5 4.3 M0.5 9 L1.6 10.2 L3.5 7.8" fill="none" stroke="#7a7a7a" stroke-width="0.8"/><path d="M5 2 H10.5 M5 5.5 H10.5 M5 9 H10.5" stroke="#7a7a7a" stroke-width="1"/></svg>
<svg class="r" style="left:741.5px;top:106.5px;" width="11" height="11" viewBox="0 0 11 11"><path d="M0.5 2 L1.6 3.2 L3.5 0.8 M0.5 5.5 L1.6 6.7 L3.5 4.3 M0.5 9 L1.6 10.2 L3.5 7.8" fill="none" stroke="#9a9a9a" stroke-width="0.8"/><path d="M5 2 H10.5 M5 5.5 H10.5 M5 9 H10.5" stroke="#9a9a9a" stroke-width="1"/></svg>
<svg class="r" style="left:612.8px;top:106.3px;" width="12" height="11" viewBox="0 0 12 11"><path d="M0.5 0.5 H8.5 L5.5 4 V9 L3.5 7.5 V4 Z" fill="#6a6a6a"/><path d="M6.5 6 L11 10.5 M11 6 L6.5 10.5" stroke="#6a6a6a" stroke-width="1.2"/></svg>
<svg class="r" style="left:766.5px;top:106px;" width="12" height="11" viewBox="0 0 12 11"><path d="M0.5 0.5 H8.5 L5.5 4 V9 L3.5 7.5 V4 Z" fill="#6a6a6a"/><path d="M6.5 6 L11 10.5 M11 6 L6.5 10.5" stroke="#6a6a6a" stroke-width="1.2"/></svg>
<div class="r" style="left:841.70px;top:86.00px;width:16.30px;height:471.80px;background:#222222;"></div>
<div class="r" style="left:843.00px;top:86.80px;width:13.30px;height:453.20px;background:#3b3b3b;"></div>
<div class="r" style="left:843.00px;top:86.80px;width:13.30px;height:12.20px;background:#4a4a4a;"></div>
<svg class="r" style="left:846px;top:90px;" width="8" height="5" viewBox="0 0 8 5"><path d="M0 4.5 L3.75 0.5 L7.5 4.5Z" fill="#9a9a9a"/></svg>
<div class="r" style="left:843.00px;top:99.00px;width:13.30px;height:95.90px;background:#4e4e4e;"></div>
<div class="r" style="left:843.00px;top:528.00px;width:13.30px;height:12.00px;background:#4a4a4a;"></div>
<svg class="r" style="left:846px;top:532px;" width="8" height="5" viewBox="0 0 8 5"><path d="M0 0.5 L3.75 4.5 L7.5 0.5Z" fill="#9a9a9a"/></svg>
<div class="r" style="left:0.00px;top:539.60px;width:858.00px;height:18.20px;background:#262626;"></div>
<div class="r" style="left:0.00px;top:539.60px;width:842.00px;height:1.00px;background:#1e1e1e;"></div>
<svg class="r" style="left:15px;top:545px;" width="5" height="8" viewBox="0 0 5 8"><path d="M4.5 0 V7.5 L0.5 3.75Z" fill="#8a8a8a"/></svg>
<svg class="r" style="left:33px;top:545px;" width="5" height="8" viewBox="0 0 5 8"><path d="M0.5 0 V7.5 L4.5 3.75Z" fill="#8a8a8a"/></svg>
<div class="r" style="left:63.00px;top:542.00px;width:1.00px;height:13.00px;background:#4a4a4a;"></div>
<div class="r" style="left:99.60px;top:542.00px;width:1.00px;height:13.00px;background:#4a4a4a;"></div>
<div class="r" style="left:138.60px;top:542.00px;width:1.00px;height:13.00px;background:#4a4a4a;"></div>
<div class="t" style="left:70.00px;top:543.23px;font-size:10.75px;color:#e0e0e0;">Data</div>
<div class="t" style="left:107.70px;top:543.36px;font-size:10.48px;color:#e0e0e0;">Pivot</div>
<div class="t" style="left:146.60px;top:543.43px;font-size:10.34px;color:#e0e0e0;">Dashboard</div>
<div class="r" style="left:206.60px;top:539.60px;width:47.70px;height:17.60px;background:#ffffff;"></div>
<div class="r" style="left:206.60px;top:555.80px;width:47.70px;height:1.40px;background:#217346;"></div>
<div class="t" style="left:212.00px;top:543.20px;font-size:10.80px;font-weight:bold;color:#217346;">Details</div>
<svg class="r" style="left:274px;top:542px;" width="13" height="13" viewBox="0 0 13 13"><circle cx="6.5" cy="6.5" r="5.8" fill="none" stroke="#d8d8d8" stroke-width="1.1"/><path d="M6.5 3.5 V9.5 M3.5 6.5 H9.5" stroke="#d8d8d8" stroke-width="1.1"/></svg>
<div class="r" style="left:513.00px;top:543.00px;width:1.50px;height:1.50px;background:#d8d8d8;"></div>
<div class="r" style="left:513.00px;top:547.00px;width:1.50px;height:1.50px;background:#d8d8d8;"></div>
<div class="r" style="left:513.00px;top:551.00px;width:1.50px;height:1.50px;background:#d8d8d8;"></div>
<div class="r" style="left:524.20px;top:542.60px;width:317.80px;height:12.00px;background:#3a3a3a;"></div>
<div class="r" style="left:538.00px;top:542.60px;width:269.00px;height:12.00px;background:#555555;"></div>
<div class="r" style="left:524.20px;top:542.60px;width:13.30px;height:12.00px;background:#454545;"></div>
<div class="r" style="left:829.50px;top:542.60px;width:12.50px;height:12.00px;background:#454545;"></div>
<svg class="r" style="left:528px;top:545px;" width="5" height="8" viewBox="0 0 5 8"><path d="M4.5 0 V7 L0.5 3.5Z" fill="#8a8a8a"/></svg>
<svg class="r" style="left:833px;top:545px;" width="5" height="8" viewBox="0 0 5 8"><path d="M0.5 0 V7 L4.5 3.5Z" fill="#8a8a8a"/></svg>
<div class="r" style="left:0.00px;top:558.00px;width:1024.00px;height:18.00px;background:#262626;"></div>
<div class="r" style="left:0.00px;top:557.90px;width:1024.00px;height:1.00px;background:#333333;"></div>
<div class="r" style="left:0.00px;top:575.00px;width:1024.00px;height:1.00px;background:#0e0e0e;"></div>
<div class="r" style="left:787.20px;top:558.00px;width:31.40px;height:18.00px;background:#3d3d3d;"></div>
<svg class="r" style="left:796px;top:561px;" width="12" height="11" viewBox="0 0 12 11"><path d="M0.5 0.5 H11.5 V10.5 H0.5 Z M0.5 3.8 H11.5 M0.5 7.2 H11.5 M4.2 0.5 V10.5 M7.8 0.5 V10.5" fill="none" stroke="#e8e8e8" stroke-width="1"/></svg>
<svg class="r" style="left:828px;top:561px;" width="12" height="11" viewBox="0 0 12 11"><rect x="0.5" y="0.5" width="11" height="10" fill="none" stroke="#c8c8c8"/><rect x="3" y="2.5" width="6" height="6" fill="none" stroke="#c8c8c8"/></svg>
<svg class="r" style="left:861px;top:561px;" width="11" height="10" viewBox="0 0 11 10"><rect x="0.5" y="0.5" width="10" height="9" fill="none" stroke="#e8e8e8"/><rect x="1" y="1" width="3" height="5" fill="#e8e8e8"/><rect x="5" y="1" width="3" height="5" fill="#e8e8e8"/></svg>
<div class="r" style="left:887.40px;top:565.50px;width:5.10px;height:1.00px;background:#8a8a8a;"></div>
<div class="r" style="left:897.60px;top:565.30px;width:79.00px;height:1.40px;background:#e8e8e8;"></div>
<div class="r" style="left:935.00px;top:562.00px;width:4.20px;height:9.00px;background:#f0f0f0;"></div>
<div class="r" style="left:980.80px;top:565.50px;width:6.00px;height:1.00px;background:#8a8a8a;"></div>
<div class="r" style="left:983.30px;top:563.00px;width:1.00px;height:6.00px;background:#8a8a8a;"></div>
<div class="t" style="left:997.50px;top:563.35px;font-size:8.09px;color:#f0f0f0;">100%</div>
<div class="r" style="left:858.00px;top:86.00px;width:166.00px;height:471.20px;background:#262626;"></div>
<div class="r" style="left:858.00px;top:86.00px;width:1.00px;height:471.00px;background:#333333;"></div>
<div class="t" style="left:868.00px;top:96.10px;font-size:15.81px;color:#f0f0f0;">PivotTable F..</div>
<svg class="r" style="left:970px;top:100px;" width="8" height="5" viewBox="0 0 8 5"><path d="M0 0 H7.5 L3.75 4Z" fill="#e8e8e8"/></svg>
<svg class="r" style="left:1002px;top:99px;" width="9" height="9" viewBox="0 0 9 9"><path d="M0.8 0.8 L8.2 8.2 M8.2 0.8 L0.8 8.2" stroke="#f0f0f0" stroke-width="1.8"/></svg>
<div class="t" style="left:869.30px;top:123.13px;font-size:9.75px;color:#e0e0e0;">Choose fields to add to</div>
<div class="t" style="left:869.30px;top:136.92px;font-size:9.75px;color:#e0e0e0;">report:</div>
<div class="r" style="left:981.20px;top:123.30px;width:33.70px;height:20.40px;background:#2b2b2b;border:1px solid #4a4a4a;box-sizing:border-box;"></div>
<svg class="r" style="left:987px;top:128px;" width="12" height="12" viewBox="0 0 12 12"><circle cx="6" cy="6" r="3.8" fill="none" stroke="#8a8a8a" stroke-width="2.2" stroke-dasharray="1.6 1.4"/><circle cx="6" cy="6" r="2.8" fill="none" stroke="#8a8a8a" stroke-width="1.3"/></svg>
<svg class="r" style="left:1005px;top:132px;" width="7" height="4" viewBox="0 0 7 4"><path d="M0 0 H6 L3 3.5Z" fill="#e8e8e8"/></svg>
<div class="r" style="left:869.00px;top:158.10px;width:146.00px;height:15.40px;background:#333333;border:1px solid #5a5a5a;box-sizing:border-box;"></div>
<div class="t" style="left:870.50px;top:162.39px;font-size:9.22px;color:#8a8a8a;">Search</div>
<svg class="r" style="left:1002px;top:160px;" width="11" height="12" viewBox="0 0 11 12"><circle cx="6.5" cy="4.5" r="3.5" fill="#f0f0f0" stroke="#4a90d9" stroke-width="1"/><path d="M4 7 L1 10.5" stroke="#4a90d9" stroke-width="1.6"/></svg>
<div class="r" style="left:869.00px;top:187.30px;width:145.40px;height:134.70px;background:#2e2e2e;"></div>
<div class="r" style="left:870.20px;top:192.40px;width:10.80px;height:10.60px;background:#3c3c3c;border:1px solid #7a7a7a;box-sizing:border-box;"></div>
<div class="t" style="left:885.10px;top:193.20px;font-size:9.80px;color:#cfcfcf;">Frame Size</div>
<div class="r" style="left:870.20px;top:208.90px;width:10.80px;height:10.60px;background:#3c3c3c;border:1px solid #7a7a7a;box-sizing:border-box;"></div>
<svg class="r" style="left:871px;top:209.7px;" width="9" height="9" viewBox="0 0 9 9"><path d="M1.5 4.5 L3.8 7 L8 1.5" fill="none" stroke="#f0f0f0" stroke-width="1.3"/></svg>
<div class="t" style="left:885.10px;top:209.70px;font-size:9.80px;font-weight:bold;color:#f0f0f0;">Order Quantity</div>
<div class="r" style="left:870.20px;top:225.50px;width:10.80px;height:10.60px;background:#3c3c3c;border:1px solid #7a7a7a;box-sizing:border-box;"></div>
<div class="t" style="left:885.10px;top:226.30px;font-size:9.80px;color:#cfcfcf;">Unit Cost</div>
<div class="r" style="left:870.20px;top:242.00px;width:10.80px;height:10.60px;background:#3c3c3c;border:1px solid #7a7a7a;box-sizing:border-box;"></div>
<div class="t" style="left:885.10px;top:242.80px;font-size:9.80px;color:#cfcfcf;">Unit Price</div>
<div class="r" style="left:870.20px;top:258.40px;width:10.80px;height:10.60px;background:#3c3c3c;border:1px solid #7a7a7a;box-sizing:border-box;"></div>
<div class="t" style="left:885.10px;top:259.20px;font-size:9.80px;color:#cfcfcf;">Cost</div>
<div class="r" style="left:870.20px;top:275.10px;width:10.80px;height:10.60px;background:#3c3c3c;border:1px solid #7a7a7a;box-sizing:border-box;"></div>
<svg class="r" style="left:871px;top:275.9px;" width="9" height="9" viewBox="0 0 9 9"><path d="M1.5 4.5 L3.8 7 L8 1.5" fill="none" stroke="#f0f0f0" stroke-width="1.3"/></svg>
<div class="t" style="left:885.10px;top:275.90px;font-size:9.80px;font-weight:bold;color:#f0f0f0;">Revenue</div>
<div class="r" style="left:870.20px;top:291.50px;width:10.80px;height:10.60px;background:#3c3c3c;border:1px solid #7a7a7a;box-sizing:border-box;"></div>
<svg class="r" style="left:871px;top:292.3px;" width="9" height="9" viewBox="0 0 9 9"><path d="M1.5 4.5 L3.8 7 L8 1.5" fill="none" stroke="#f0f0f0" stroke-width="1.3"/></svg>
<div class="t" style="left:885.10px;top:292.30px;font-size:9.80px;font-weight:bold;color:#f0f0f0;">Profit</div>
<div class="t" style="left:870.00px;top:317.05px;font-size:9.30px;color:#cfcfcf;">More Tables</div>
<div class="r" style="left:869.00px;top:322.00px;width:145.40px;height:4.00px;background:#262626;"></div>
<div class="r" style="left:1001.30px;top:188.60px;width:12.50px;height:11.70px;background:#3a3a3a;"></div>
<svg class="r" style="left:1004px;top:192px;" width="8" height="5" viewBox="0 0 8 5"><path d="M0 4.5 L3.75 0.5 L7.5 4.5Z" fill="#8a8a8a"/></svg>
<div class="r" style="left:1001.30px;top:264.00px;width:12.50px;height:41.60px;background:#4a4a4a;"></div>
<div class="r" style="left:1001.30px;top:309.00px;width:12.50px;height:11.70px;background:#3a3a3a;"></div>
<svg class="r" style="left:1004px;top:313px;" width="8" height="5" viewBox="0 0 8 5"><path d="M0 0.5 L3.75 4.5 L7.5 0.5Z" fill="#8a8a8a"/></svg>
<div class="t" style="left:871.75px;top:340.20px;font-size:9.40px;color:#e0e0e0;">Drag fields between areas below:</div>
<svg class="r" style="left:874px;top:366.5px;" width="10" height="10" viewBox="0 0 10 10"><path d="M0 0 H9.5 L6 4.2 V9.5 L3.5 8 V4.2Z" fill="#f0f0f0"/></svg>
<div class="t" style="left:889.00px;top:368.62px;font-size:8.96px;color:#e0e0e0;">Filters</div>
<div class="r" style="left:942.00px;top:365.30px;width:1.00px;height:151.50px;background:#3c3c3c;"></div>
<svg class="r" style="left:948.5px;top:367px;" width="8" height="9" viewBox="0 0 8 9"><path d="M0.8 0 V9 M3.5 0 V9 M6.2 0 V9" stroke="#f0f0f0" stroke-width="1.4"/></svg>
<div class="t" style="left:962.70px;top:367.89px;font-size:9.43px;color:#e0e0e0;">Columns</div>
<div class="r" style="left:871.00px;top:382.00px;width:66.30px;height:53.40px;background:#2e2e2e;"></div>
<div class="r" style="left:944.30px;top:382.00px;width:70.70px;height:53.40px;background:#2e2e2e;"></div>
<div class="r" style="left:945.50px;top:383.50px;width:69.10px;height:18.10px;background:#363636;border:1px solid #4a4a4a;box-sizing:border-box;"></div>
<div class="t" style="left:953.50px;top:388.70px;font-size:10.00px;color:#8a8a8a;">Σ</div>
<div class="t" style="left:965.50px;top:389.21px;font-size:8.98px;color:#f0f0f0;">Values</div>
<svg class="r" style="left:1000px;top:390px;" width="8" height="5" viewBox="0 0 8 5"><path d="M0 0 H7.5 L3.75 4Z" fill="#e8e8e8"/></svg>
<div class="r" style="left:871.00px;top:440.00px;width:144.10px;height:1.00px;background:#3c3c3c;"></div>
<svg class="r" style="left:874.5px;top:448px;" width="9" height="9" viewBox="0 0 9 9"><path d="M0 1 H9 M0 3.5 H9 M0 6 H9 M0 8.5 H9" stroke="#f0f0f0" stroke-width="1.1"/></svg>
<div class="t" style="left:889.30px;top:450.02px;font-size:9.16px;color:#e0e0e0;">Rows</div>
<div class="t" style="left:948.60px;top:449.10px;font-size:11.00px;color:#f0f0f0;">Σ</div>
<div class="t" style="left:962.20px;top:449.94px;font-size:9.32px;color:#e0e0e0;">Values</div>
<div class="r" style="left:871.00px;top:463.00px;width:66.00px;height:53.30px;background:#2e2e2e;"></div>
<div class="r" style="left:944.80px;top:463.00px;width:69.50px;height:53.30px;background:#2e2e2e;"></div>
<div class="r" style="left:0;top:0;width:1024px;height:576px;clip-path:inset(463px 4px 56px 860px);">
<div class="r" style="left:871.00px;top:455.00px;width:52.10px;height:20.50px;background:#363636;border:1px solid #4a4a4a;box-sizing:border-box;"></div>
<div class="t" style="left:878.00px;top:461.75px;font-size:9.40px;color:#e0e0e0;">Prod...</div>
<svg class="r" style="left:908px;top:463.75px;" width="8" height="5" viewBox="0 0 8 5"><path d="M0 0 H7.5 L3.75 4Z" fill="#e8e8e8"/></svg>
<div class="r" style="left:871.00px;top:477.20px;width:52.10px;height:18.40px;background:#363636;border:1px solid #4a4a4a;box-sizing:border-box;"></div>
<div class="t" style="left:878.00px;top:482.90px;font-size:9.40px;color:#e0e0e0;">Cou...</div>
<svg class="r" style="left:908px;top:484.9px;" width="8" height="5" viewBox="0 0 8 5"><path d="M0 0 H7.5 L3.75 4Z" fill="#e8e8e8"/></svg>
<div class="r" style="left:871.00px;top:497.70px;width:52.10px;height:18.30px;background:#363636;border:1px solid #4a4a4a;box-sizing:border-box;"></div>
<div class="t" style="left:878.00px;top:503.35px;font-size:9.40px;color:#e0e0e0;">Sub ...</div>
<svg class="r" style="left:908px;top:505.35px;" width="8" height="5" viewBox="0 0 8 5"><path d="M0 0 H7.5 L3.75 4Z" fill="#e8e8e8"/></svg>
<div class="r" style="left:944.80px;top:455.00px;width:55.90px;height:20.50px;background:#363636;border:1px solid #4a4a4a;box-sizing:border-box;"></div>
<div class="t" style="left:951.80px;top:461.75px;font-size:9.40px;color:#e0e0e0;">Sum ...</div>
<svg class="r" style="left:985.5px;top:463.75px;" width="8" height="5" viewBox="0 0 8 5"><path d="M0 0 H7.5 L3.75 4Z" fill="#e8e8e8"/></svg>
<div class="r" style="left:944.80px;top:477.20px;width:55.90px;height:18.40px;background:#363636;border:1px solid #4a4a4a;box-sizing:border-box;"></div>
<div class="t" style="left:951.80px;top:482.90px;font-size:9.40px;color:#e0e0e0;">Sum ...</div>
<svg class="r" style="left:985.5px;top:484.9px;" width="8" height="5" viewBox="0 0 8 5"><path d="M0 0 H7.5 L3.75 4Z" fill="#e8e8e8"/></svg>
<div class="r" style="left:944.80px;top:497.70px;width:55.90px;height:18.30px;background:#363636;border:1px solid #4a4a4a;box-sizing:border-box;"></div>
<div class="t" style="left:951.80px;top:503.35px;font-size:9.40px;color:#e0e0e0;">Sum ...</div>
<svg class="r" style="left:985.5px;top:505.35px;" width="8" height="5" viewBox="0 0 8 5"><path d="M0 0 H7.5 L3.75 4Z" fill="#e8e8e8"/></svg>
</div>
<div class="r" style="left:924.30px;top:463.00px;width:12.70px;height:53.00px;background:#2e2e2e;"></div>
<div class="r" style="left:924.30px;top:463.00px;width:12.70px;height:13.00px;background:#3a3a3a;"></div>
<svg class="r" style="left:926.8px;top:467.5px;" width="8" height="5" viewBox="0 0 8 5"><path d="M0 4.5 L3.75 0.5 L7.5 4.5Z" fill="#6a6a6a"/></svg>
<div class="r" style="left:924.30px;top:480.40px;width:12.70px;height:21.60px;background:#424242;"></div>
<div class="r" style="left:924.30px;top:503.50px;width:12.70px;height:12.50px;background:#3a3a3a;"></div>
<svg class="r" style="left:926.8px;top:508px;" width="8" height="5" viewBox="0 0 8 5"><path d="M0 0.5 L3.75 4.5 L7.5 0.5Z" fill="#6a6a6a"/></svg>
<div class="r" style="left:1002.00px;top:463.00px;width:12.30px;height:53.00px;background:#2e2e2e;"></div>
<div class="r" style="left:1002.00px;top:463.00px;width:12.30px;height:13.00px;background:#3a3a3a;"></div>
<svg class="r" style="left:1004.5px;top:467.5px;" width="8" height="5" viewBox="0 0 8 5"><path d="M0 4.5 L3.75 0.5 L7.5 4.5Z" fill="#6a6a6a"/></svg>
<div class="r" style="left:1002.00px;top:486.40px;width:12.30px;height:15.60px;background:#424242;"></div>
<div class="r" style="left:1002.00px;top:503.50px;width:12.30px;height:12.50px;background:#3a3a3a;"></div>
<svg class="r" style="left:1004.5px;top:508px;" width="8" height="5" viewBox="0 0 8 5"><path d="M0 0.5 L3.75 4.5 L7.5 0.5Z" fill="#6a6a6a"/></svg>
<div class="r" style="left:870.70px;top:536.50px;width:11.30px;height:10.70px;background:#3a3a3a;border:1px solid #6a6a6a;box-sizing:border-box;"></div>
<div class="t" style="left:886.50px;top:538.95px;font-size:9.31px;color:#e0e0e0;">Defer Layout Upd...</div>
<div class="r" style="left:976.60px;top:532.20px;width:37.90px;height:19.20px;border:1px solid #383838;box-sizing:border-box;"></div>
<div class="t" style="left:981.00px;top:538.90px;font-size:8.99px;color:#5a5a5a;">Update</div>
</body></html>
